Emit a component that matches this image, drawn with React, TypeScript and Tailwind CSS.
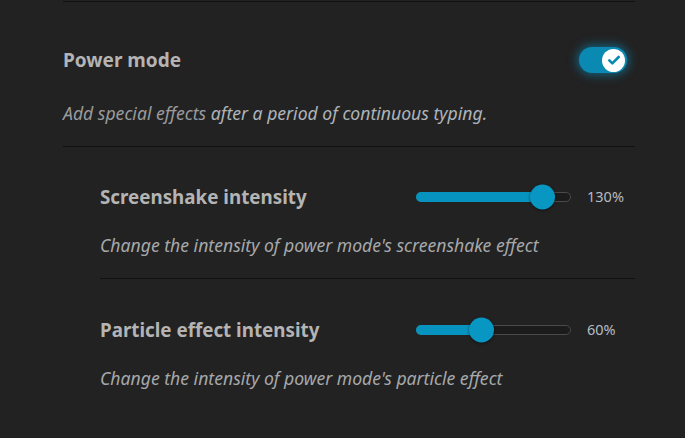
import React from "react";

function Toggle() {
    return (
        <div className="relative flex items-center justify-end w-[48px] h-[26px] rounded-full bg-[#0a8ab3] shadow-[0_0_10px_2px_rgba(10,150,200,0.55)] px-[2px]">
            <div className="w-[23px] h-[23px] rounded-full bg-white flex items-center justify-center">
                <svg width="16" height="16" viewBox="0 0 24 24" fill="none" stroke="#0a8ab3" strokeWidth="4" strokeLinecap="round" strokeLinejoin="round">
                    <path d="M5 12.5l4.5 4.5L19 7.5" />
                </svg>
            </div>
        </div>
    );
}

function Slider({ fill, value }: { fill: number; value: string }) {
    return (
        <div className="flex items-center">
            <div className="relative w-[155px] h-[10px] rounded-full border border-[#4a4a4a] bg-[#1c1c1c]">
                <div className="absolute left-[-1px] top-[-1px] h-[10px] rounded-full bg-[#0793bf]" style={{ width: fill + 12 }} />
                <div
                    className="absolute top-1/2 w-[25px] h-[25px] -translate-y-1/2 rounded-full bg-[#0897c3] shadow-[0_1px_3px_rgba(0,0,0,0.5)]"
                    style={{ left: fill - 12.5 }}
                />
            </div>
            <span className="ml-[16px] text-[14.5px] text-[#b3bcc4]">{value}</span>
        </div>
    );
}

function SubSetting({ title, desc, fill, value }: { title: string; desc: string; fill: number; value: string }) {
    return (
        <div>
            <div className="flex items-center h-[28px]">
                <h3 className="w-[316px] text-[18.8px] font-bold text-[#b4b4b4]">{title}</h3>
                <Slider fill={fill} value={value} />
            </div>
            <p className="mt-[22px] h-[24px] leading-[24px] text-[17.6px] italic text-[#a6a9ac]">{desc}</p>
        </div>
    );
}

export default function App() {
    return (
        <div className="min-h-[438px] bg-[#222222] pl-[63px] pr-[50px] pt-px" style={{ fontFamily: '"Noto Sans", sans-serif' }}>
            <div className="h-px bg-[#111111]" />
            {/* Power mode */}
            <div className="mt-[44px] flex items-center justify-between h-[28px]">
                <h2 className="text-[19px] font-bold text-[#b4b4b4]">Power mode</h2>
                <div className="mr-[8px]">
                    <Toggle />
                </div>
            </div>
            <p className="mt-[27px] h-[24px] leading-[24px] text-[17.6px] italic text-[#aeb4ba]">
                <span className="text-[#999b9e]">Add special effects</span> after a period of continuous typing.
            </p>
            <div className="mt-[21px] h-px bg-[#111111]" />

            <div className="pl-[37px]">
                <div className="pt-[36px]">
                    <SubSetting
                        title="Screenshake intensity"
                        desc="Change the intensity of power mode's screenshake effect"
                        fill={125}
                        value="130%"
                    />
                </div>
                <div className="mt-[21px] h-px bg-[#111111]" />
                <div className="pt-[37px]">
                    <SubSetting
                        title="Particle effect intensity"
                        desc="Change the intensity of power mode's particle effect"
                        fill={64}
                        value="60%"
                    />
                </div>
            </div>
        </div>
    );
}
